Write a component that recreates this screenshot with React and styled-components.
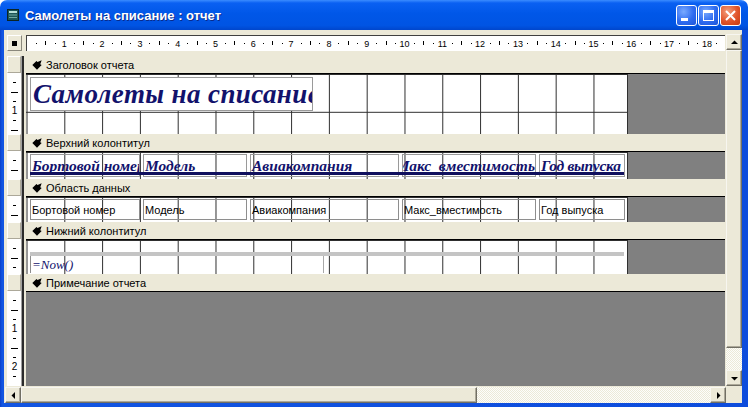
import React from "react";
import styled, { createGlobalStyle, css } from "styled-components";

const CM = 37.8;
const NAVY = "#12126c";

const Global = createGlobalStyle`
  html, body { margin: 0; padding: 0; background: #fff; }
  body { width: 748px; height: 407px; overflow: hidden; font-family: "Liberation Sans", Arial, sans-serif; }
`;

const Window = styled.div`
  width: 748px;
  height: 407px;
  display: flex;
  flex-direction: column;
  background: #fff;
`;

const TitleBar = styled.div`
  height: 30px;
  flex: none;
  display: flex;
  align-items: center;
  padding: 0 7px 0 6px;
  border-radius: 7px 7px 0 0;
  background: linear-gradient(180deg, #3b8cff 0%, #0a60f2 10%, #0057e8 45%, #0054e3 85%, #0046cc 100%);
`;

const TitleText = styled.div`
  margin-left: 5px;
  flex: 1;
  color: #fff;
  font: bold 13px "Liberation Sans", Arial, sans-serif;
  text-shadow: 1px 1px 0 #0a2a8a;
  white-space: nowrap;
`;

const CapButtons = styled.div`
  display: flex;
  gap: 1px;
`;

const CapBtn = styled.div`
  width: 21px;
  height: 21px;
  box-sizing: border-box;
  border: 1px solid #fff;
  border-radius: 3px;
  display: flex;
  align-items: center;
  justify-content: center;
  background: ${(p) =>
    p.$close
      ? "radial-gradient(circle at 35% 30%, #f4a07e, #e0542a 55%, #c63a10)"
      : "radial-gradient(circle at 35% 30%, #79aaff, #2f6cf0 55%, #1d55d8)"};
`;

const Frame = styled.div`
  flex: 1;
  display: flex;
  padding: 0 6px 4px 4px;
  background: linear-gradient(90deg, #0a3fc8 0, #1255e2 2px, #0d4cdc 100%);
  min-height: 0;
`;

const Client = styled.div`
  flex: 1;
  display: flex;
  flex-direction: column;
  background: #ece9d8;
  padding-top: 4px;
  min-width: 0;
`;

const Body = styled.div`
  flex: 1;
  display: flex;
  min-height: 0;
`;

const Main = styled.div`
  flex: 1;
  display: flex;
  flex-direction: column;
  padding-top: 1px;
  min-width: 0;
`;

const RulerRow = styled.div`
  height: 16px;
  flex: none;
  display: flex;
  margin-bottom: 5px;
`;

const Corner = styled.div`
  width: 15px;
  margin-left: 3px;
  margin-right: 4px;
  box-sizing: border-box;
  border: 1px solid;
  border-color: #fff #8a887c #8a887c #fff;
  display: flex;
  align-items: center;
  justify-content: center;
  &::after {
    content: "";
    width: 5px;
    height: 5px;
    background: #000;
  }
`;

const HRulerBox = styled.div`
  flex: 1;
  margin-right: 1px;
  background: #fff;
  border-top: 1px solid #404040;
  border-left: 1px solid #404040;
  overflow: hidden;
`;

const RulerSvg = styled.svg`
  display: block;
`;

const Row = styled.div`
  display: flex;
  flex: ${(p) => (p.$grow ? 1 : "none")};
  height: ${(p) => (p.$grow ? "auto" : `${p.$h}px`)};
  min-height: 0;
`;

const Gutter = styled.div`
  width: 14px;
  margin-left: 3px;
  flex: none;
  box-sizing: border-box;
  overflow: hidden;
  ${(p) =>
    p.$bar
      ? css`
          background: #ece9d8;
          border: 1px solid;
          border-color: #fff #aca899 #aca899 #fff;
        `
      : css`
          background: #fff;
        `}
`;

const Sep = styled.div`
  width: 5px;
  flex: none;
  background: linear-gradient(90deg, #a0a0a0 0 1px, #2b2b2b 1px 3px, #ece9d8 3px 5px);
`;

const Bar = styled.div`
  flex: 1;
  margin-right: 1px;
  display: flex;
  align-items: center;
  gap: 4px;
  padding-left: 6px;
  font-size: 11px;
  color: #000;
  background: #ece9d8;
  white-space: nowrap;
`;

const ContentRow = styled.div`
  flex: 1;
  margin-right: 1px;
  display: flex;
  border-top: 1px solid #000;
  background: #808080;
  min-width: 0;
`;

const Paper = styled.div`
  width: 602px;
  flex: none;
  box-sizing: border-box;
  border-right: 1px solid #303030;
  position: relative;
  overflow: hidden;
  background-color: #fff;
  background-image: linear-gradient(90deg, transparent calc(100% - 1px), #2e2e2e calc(100% - 1px)),
    linear-gradient(180deg, transparent calc(100% - 1px), #2e2e2e calc(100% - 1px));
  background-size: ${CM}px ${CM}px;
  background-position: 1.5px 1px;
  padding-left: 4px;
  padding-top: ${(p) => p.$pt || 0}px;
  display: flex;
  flex-direction: ${(p) => (p.$col ? "column" : "row")};
  align-items: flex-start;
  gap: ${(p) => (p.$col ? 0 : 3)}px;
`;

const TitleBox = styled.div`
  width: 283px;
  height: 34px;
  box-sizing: border-box;
  border: 1px solid #9a9a9a;
  background: #fff;
  overflow: hidden;
  display: flex;
  align-items: center;
  padding-left: 2px;
  white-space: nowrap;
  color: ${NAVY};
  letter-spacing: 0.4px;
  font: italic bold 27px "Liberation Serif", "Times New Roman", serif;
`;

const LabelBox = styled.div`
  width: ${(p) => p.$w}px;
  height: 23px;
  flex: none;
  box-sizing: border-box;
  border: 1px solid #9a9a9a;
  overflow: hidden;
  display: flex;
  align-items: center;
  justify-content: ${(p) => (p.$end ? "flex-end" : "flex-start")};
  padding: 0 0 0 1px;
  white-space: nowrap;
  color: ${NAVY};
  font: italic bold 15.5px "Liberation Serif", "Times New Roman", serif;
  letter-spacing: ${(p) => (p.$tight ? "-0.3px" : "0")};
`;

const UnderLine = styled.div`
  position: absolute;
  left: 4px;
  top: 20px;
  width: 594px;
  height: 3px;
  background: #10105e;
`;

const FieldBox = styled.div`
  width: ${(p) => p.$w}px;
  height: 21px;
  flex: none;
  box-sizing: border-box;
  border: 1px solid #8e8e8e;
  overflow: hidden;
  display: flex;
  align-items: center;
  padding-left: 1px;
  white-space: nowrap;
  color: #000;
  font-size: 11px;
`;

const FooterLine = styled.div`
  margin-top: 12px;
  width: 594px;
  height: 4px;
  background: #c4c4c4;
`;

const NowBox = styled.div`
  width: 294px;
  height: 17px;
  box-sizing: border-box;
  border-left: 1px solid #8e8e8e;
  border-right: 1px solid #a8a8a8;
  display: flex;
  align-items: center;
  padding-left: 1px;
  color: ${NAVY};
  font: italic 13px "Liberation Serif", "Times New Roman", serif;
`;

const Gray = styled.div`
  flex: 1;
  background: #808080;
`;

const VScroll = styled.div`
  width: 16px;
  flex: none;
  display: flex;
  flex-direction: column;
`;

const raised = css`
  box-sizing: border-box;
  background: #ece9d8;
  border: 1px solid;
  border-color: #f7f6f0 #716f64 #716f64 #f7f6f0;
  box-shadow: inset -1px -1px 0 #aca899;
`;

const ScrollBtn = styled.div`
  ${raised};
  width: 16px;
  height: 16px;
  flex: none;
  display: flex;
  align-items: center;
  justify-content: center;
`;

const Thumb = styled.div`
  ${raised};
  flex: none;
  ${(p) => (p.$vertical ? `height: ${p.$size}px;` : `width: ${p.$size}px;`)}
`;

const Track = styled.div`
  flex: 1;
  background-color: #ece9d8;
  background-image: repeating-conic-gradient(#fdfdfb 0 25%, #ece9d8 0 50%);
  background-size: 2px 2px;
`;

const HScroll = styled.div`
  height: 17px;
  flex: none;
  display: flex;
  padding-left: 1px;
  padding-top: 1px;
  box-sizing: border-box;
`;

const CornerBox = styled.div`
  width: 16px;
  flex: none;
  background: #ece9d8;
`;

function HRuler() {
  const W = 698;
  const marks = [];
  for (let q = 1; (q * CM) / 4 < W - 4; q++) {
    const x = (q * CM) / 4 - 0.5;
    if (q % 4 === 0)
      marks.push(
        <text key={q} x={x} y={10.5} textAnchor="middle" fontSize="9" fontFamily="Liberation Sans, Arial, sans-serif" fill="#000">
          {q / 4}
        </text>
      );
    else if (q % 2 === 0) marks.push(<rect key={q} x={Math.round(x)} y={5} width={1} height={4} fill="#000" />);
    else marks.push(<rect key={q} x={Math.round(x)} y={7} width={1} height={1} fill="#000" />);
  }
  return (
    <RulerSvg width={W} height={15}>
      {marks}
    </RulerSvg>
  );
}

function VRuler({ h }) {
  const marks = [];
  for (let q = 1; (q * CM) / 4 < h - 1; q++) {
    const y = (q * CM) / 4;
    if (q % 4 === 0)
      marks.push(
        <text key={q} x="7.5" y={y + 3.5} textAnchor="middle" fontSize="10" fontFamily="Liberation Sans, Arial, sans-serif" fill="#000">
          {q / 4}
        </text>
      );
    else if (q % 2 === 0) marks.push(<rect key={q} x="4" y={Math.round(y)} width="7" height="1" fill="#000" />);
    else marks.push(<rect key={q} x="6" y={Math.round(y)} width="3" height="1" fill="#000" />);
  }
  return (
    <RulerSvg width="14" height={h}>
      {marks}
    </RulerSvg>
  );
}

const SectionIcon = () => (
  <svg width="10" height="10" viewBox="0 0 9 9">
    <path d="M0.3 4.5 L4 0.8 L5 1.8 L8.7 0.3 L7.4 3.9 L8.7 4.6 L4.5 8.8 Z" fill="#000" />
  </svg>
);

const Arrow = ({ dir }) => {
  const pts = {
    up: "1,6 4.5,2.5 8,6",
    down: "1,3 4.5,6.5 8,3",
    left: "6,1 2.5,4.5 6,8",
    right: "3,1 6.5,4.5 3,8",
  }[dir];
  return (
    <svg width="9" height="9" viewBox="0 0 9 9">
      <polygon points={pts} fill="#000" />
    </svg>
  );
};

function SectionBar({ label }) {
  return (
    <Row $h={17}>
      <Gutter $bar />
      <Sep />
      <Bar>
        <SectionIcon />
        {label}
      </Bar>
    </Row>
  );
}

function Section({ h, grow, children }) {
  return (
    <Row $h={h} $grow={grow}>
      <Gutter>
        <VRuler h={grow ? 100 : h} />
      </Gutter>
      <Sep />
      <ContentRow>
        {children}
        {children && <Gray />}
      </ContentRow>
    </Row>
  );
}

const cols = [110, 104, 149, 134, 86];
const headers = ["Бортовой номер", "Модель", "Авиакомпания", "Макс_вместимость", "Год выпуска"];

export default function App() {
  return (
    <>
      <Global />
      <Window>
        <TitleBar>
          <svg width="14" height="14" viewBox="0 0 14 14">
            <rect x="1.5" y="1.5" width="11" height="11" fill="#1d5656" stroke="#0b2424" />
            <rect x="3" y="3" width="8" height="2" fill="#b8e0d8" />
            <rect x="3" y="6.5" width="8" height="1" fill="#6fa8a0" />
            <rect x="3" y="9" width="8" height="1" fill="#6fa8a0" />
          </svg>
          <TitleText>Самолеты на списание : отчет</TitleText>
          <CapButtons>
            <CapBtn>
              <svg width="19" height="19" viewBox="0 0 19 19">
                <rect x="4" y="12" width="7" height="3" fill="#fff" />
              </svg>
            </CapBtn>
            <CapBtn>
              <svg width="19" height="19" viewBox="0 0 19 19">
                <rect x="4.5" y="4.5" width="10" height="10" fill="none" stroke="#fff" />
                <rect x="4" y="4" width="11" height="3" fill="#fff" />
              </svg>
            </CapBtn>
            <CapBtn $close>
              <svg width="19" height="19" viewBox="0 0 19 19">
                <path d="M5 5 L14 14 M14 5 L5 14" stroke="#fff" strokeWidth="2" />
              </svg>
            </CapBtn>
          </CapButtons>
        </TitleBar>
        <Frame>
          <Client>
            <Body>
              <Main>
                <RulerRow>
                  <Corner />
                  <HRulerBox>
                    <HRuler />
                  </HRulerBox>
                </RulerRow>

                <SectionBar label="Заголовок отчета" />
                <Section h={61}>
                  <Paper $pt={3}>
                    <TitleBox>Самолеты на списание</TitleBox>
                  </Paper>
                </Section>

                <SectionBar label="Верхний колонтитул" />
                <Section h={28}>
                  <Paper $pt={2}>
                    {headers.map((t, i) => (
                      <LabelBox key={t} $w={cols[i]} $end={i === 3} $tight={i === 4}>
                        {t}
                      </LabelBox>
                    ))}
                    <UnderLine />
                  </Paper>
                </Section>

                <SectionBar label="Область данных" />
                <Section h={26}>
                  <Paper $pt={2}>
                    {headers.map((t, i) => (
                      <FieldBox key={t} $w={cols[i]}>
                        {t}
                      </FieldBox>
                    ))}
                  </Paper>
                </Section>

                <SectionBar label="Нижний колонтитул" />
                <Section h={35}>
                  <Paper $col>
                    <FooterLine />
                    <NowBox>=Now()</NowBox>
                  </Paper>
                </Section>

                <SectionBar label="Примечание отчета" />
                <Section grow />
              </Main>
              <VScroll>
                <ScrollBtn>
                  <Arrow dir="up" />
                </ScrollBtn>
                <Thumb $vertical $size={298} />
                <Track />
                <ScrollBtn>
                  <Arrow dir="down" />
                </ScrollBtn>
              </VScroll>
            </Body>
            <HScroll>
              <ScrollBtn>
                <Arrow dir="left" />
              </ScrollBtn>
              <Thumb $size={456} />
              <Track />
              <ScrollBtn>
                <Arrow dir="right" />
              </ScrollBtn>
              <CornerBox />
            </HScroll>
          </Client>
        </Frame>
      </Window>
    </>
  );
}
